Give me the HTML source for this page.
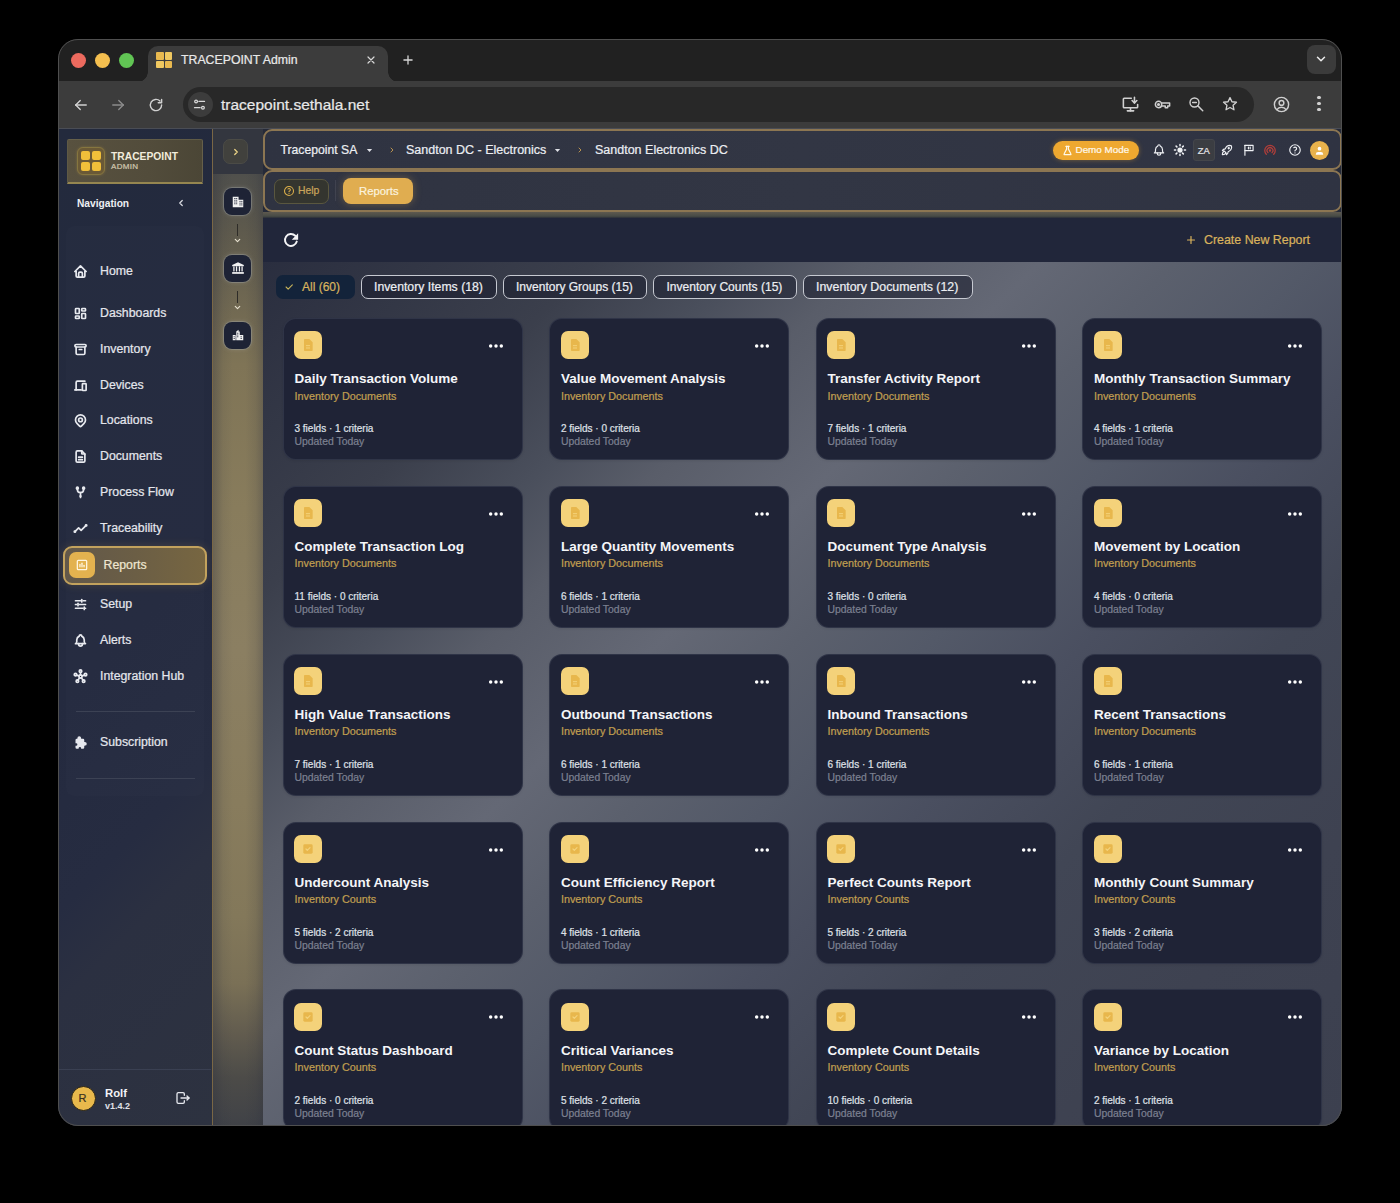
<!DOCTYPE html><html><head><meta charset="utf-8"><style>
*{box-sizing:border-box;margin:0;padding:0}
html,body{width:1400px;height:1203px;background:#000;overflow:hidden;font-family:"Liberation Sans",sans-serif}
.a{position:absolute;display:block}
.t{position:absolute;white-space:nowrap}
#root{position:absolute;left:0;top:0;width:1400px;height:1203px;clip-path:inset(39px 58px 77px 58px round 20px);background:#212121}
#winb{position:absolute;left:58px;top:39px;width:1284px;height:1087px;border-radius:20px;border:1.6px solid #4f4f4f;z-index:50}
.tl{position:absolute;top:53px;width:15px;height:15px;border-radius:50%}
#tab{position:absolute;left:148px;top:46px;width:240px;height:36px;background:#3c3c3c;border-radius:10px 10px 0 0}
#tab:before,#tab:after{content:"";position:absolute;bottom:0;width:10px;height:10px}
#tab:before{left:-10px;background:radial-gradient(circle at 0 0,transparent 9.5px,#3c3c3c 10px)}
#tab:after{right:-10px;background:radial-gradient(circle at 100% 0,transparent 9.5px,#3c3c3c 10px)}
.box{position:absolute;border-radius:9px;border:2.2px solid #8c7652;background:linear-gradient(90deg,#2f3341,#323644 50%,#2f3342)}
.card{position:absolute;width:240px;height:142px;border-radius:13px;background:#1f2336;border:1px solid rgba(150,158,178,0.14);box-shadow:0 1px 3px rgba(0,0,0,0.08)}
.cicon{position:absolute;left:10.4px;top:12.6px;width:28px;height:28px;border-radius:7px;background:#f4d27a}
.chip{position:absolute;top:275px;height:24px;border-radius:7px;border:1.5px solid #c6c9d1;background:rgba(26,30,46,0.6)}
.mbtn{position:absolute;left:224px;width:27px;height:27px;border-radius:8px;background:#1e2335;box-shadow:0 0 0 1px rgba(160,165,170,0.35),0 0 5px rgba(200,200,200,0.25)}
</style></head><body><div id="root">
<div class="tl" style="left:71px;background:#ec6a5e"></div>
<div class="tl" style="left:95px;background:#f4bf4f"></div>
<div class="tl" style="left:119px;background:#61c554"></div>
<div id="tab"></div>
<div class="a" style="left:156px;top:52px;width:16px;height:16px"><div class="a" style="left:0;top:0;width:7.5px;height:7.5px;background:#e9b94f;border-radius:1px"></div><div class="a" style="left:8.5px;top:0;width:7.5px;height:7.5px;background:#f0c860;border-radius:1px"></div><div class="a" style="left:0;top:8.5px;width:7.5px;height:7.5px;background:#f0c860;border-radius:1px"></div><div class="a" style="left:8.5px;top:8.5px;width:7.5px;height:7.5px;background:#e9b94f;border-radius:1px"></div></div>
<div class="t" style="left:181px;top:54.09px;font-size:12.3px;line-height:12.3px;color:#e8e8e8;font-weight:400;-webkit-text-stroke:0.22px currentColor;">TRACEPOINT Admin</div>
<svg class="a" style="left:365px;top:54px;" width="12" height="12" viewBox="0 0 24 24" fill="none" stroke="#d8d8d8" stroke-width="2.4" stroke-linecap="round" stroke-linejoin="round"><path d="M6 6l12 12M18 6L6 18"/></svg>
<svg class="a" style="left:401px;top:53px;" width="14" height="14" viewBox="0 0 24 24" fill="none" stroke="#d8d8d8" stroke-width="2.2" stroke-linecap="round" stroke-linejoin="round"><path d="M12 5v14"/><path d="M5 12h14"/></svg>
<div class="a" style="left:1307px;top:45px;width:29px;height:29px;border-radius:8px;background:#3b3b3b"></div>
<svg class="a" style="left:1314px;top:52px;" width="14" height="14" viewBox="0 0 24 24" fill="none" stroke="#e8e8e8" stroke-width="2.6" stroke-linecap="round" stroke-linejoin="round"><path d="M6 9l6 6 6-6"/></svg>
<div class="a" style="left:58px;top:81px;width:1284px;height:48px;background:#3c3c3c"></div>
<div class="a" style="left:58px;top:128px;width:1284px;height:1px;background:#4a4d55"></div>
<svg class="a" style="left:72px;top:96px;" width="18" height="18" viewBox="0 0 24 24" fill="none" stroke="#d0d0d0" stroke-width="1.8" stroke-linecap="round" stroke-linejoin="round"><path d="M5 12h14"/><path d="M5 12l6 6"/><path d="M5 12l6-6"/></svg>
<svg class="a" style="left:109px;top:96px;" width="18" height="18" viewBox="0 0 24 24" fill="none" stroke="#8a8a8a" stroke-width="1.8" stroke-linecap="round" stroke-linejoin="round"><path d="M5 12h14"/><path d="M13 18l6-6"/><path d="M13 6l6 6"/></svg>
<svg class="a" style="left:147px;top:96px;" width="18" height="18" viewBox="0 0 24 24" fill="none" stroke="#d0d0d0" stroke-width="1.9" stroke-linecap="round" stroke-linejoin="round"><path d="M19.5 12a7.5 7.5 0 1 1-2.2-5.3"/><path d="M19.5 4.5v4.5h-4.5"/></svg>
<div class="a" style="left:183px;top:87px;width:1071px;height:35px;border-radius:18px;background:#282828"></div>
<div class="a" style="left:187.5px;top:92px;width:25px;height:25px;border-radius:50%;background:#3c3c3c"></div>
<svg class="a" style="left:192px;top:97px;" width="15" height="15" viewBox="0 0 24 24" fill="none" stroke="#d8d8d8" stroke-width="2" stroke-linecap="round" stroke-linejoin="round"><circle cx="6.5" cy="7" r="2.2"/><path d="M11 7h9"/><circle cx="17.5" cy="17" r="2.2"/><path d="M4 17h9"/></svg>
<div class="t" style="left:221px;top:96.88px;font-size:15.5px;line-height:15.5px;color:#e8e8e8;font-weight:400;-webkit-text-stroke:0.22px currentColor;">tracepoint.sethala.net</div>
<svg class="a" style="left:1121px;top:95px;" width="19" height="19" viewBox="0 0 24 24" fill="none" stroke="#d0d0d0" stroke-width="2" stroke-linecap="round" stroke-linejoin="round"><path d="M13 4H4a1 1 0 0 0-1 1v10a1 1 0 0 0 1 1h16a1 1 0 0 0 1-1v-3"/><path d="M8 20h8"/><path d="M12 16v4"/><path d="M17 3v7"/><path d="M14 7l3 3 3-3"/></svg>
<svg class="a" style="left:1153px;top:95px;" width="19" height="19" viewBox="0 0 24 24" fill="none" stroke="#d0d0d0" stroke-width="1.9" stroke-linecap="round" stroke-linejoin="round"><circle cx="7" cy="12" r="4"/><circle cx="7" cy="12" r="1" fill="#d0d0d0"/><path d="M11 10h10v4h-2.5v2h-3v-2H11"/></svg>
<svg class="a" style="left:1187px;top:95px;" width="18" height="18" viewBox="0 0 24 24" fill="none" stroke="#d0d0d0" stroke-width="1.9" stroke-linecap="round" stroke-linejoin="round"><circle cx="10" cy="10" r="6"/><path d="M7.5 10h5"/><path d="M21 21l-6.5-6.5"/></svg>
<svg class="a" style="left:1221px;top:95px;" width="18" height="18" viewBox="0 0 24 24" fill="none" stroke="#d0d0d0" stroke-width="1.8" stroke-linecap="round" stroke-linejoin="round"><path d="M12 3.5l2.6 5.5 6 .7-4.5 4 1.2 6-5.3-3-5.3 3 1.2-6-4.5-4 6-.7z"/></svg>
<svg class="a" style="left:1272px;top:95px;" width="19" height="19" viewBox="0 0 24 24" fill="none" stroke="#d0d0d0" stroke-width="1.8" stroke-linecap="round" stroke-linejoin="round"><circle cx="12" cy="12" r="9"/><circle cx="12" cy="10" r="3"/><path d="M6.2 18.5a7 7 0 0 1 11.6 0"/></svg>
<div class="a" style="left:1317px;top:95.7px;width:3.6px;height:3.6px;border-radius:50%;background:#d0d0d0"></div>
<div class="a" style="left:1317px;top:101.7px;width:3.6px;height:3.6px;border-radius:50%;background:#d0d0d0"></div>
<div class="a" style="left:1317px;top:107.7px;width:3.6px;height:3.6px;border-radius:50%;background:#d0d0d0"></div>
<div class="a" style="left:58px;top:129px;width:154px;height:997px;background:linear-gradient(135deg,#232a3d 0%,#242a3f 50%,#262c41 68%,#2b3041 76%,#2d3240 100%)"></div>
<div class="a" style="left:211.5px;top:129px;width:1.6px;height:997px;background:#7a6745"></div>
<div class="a" style="left:67px;top:139px;width:136px;height:45px;border-radius:2px 2px 0 0;background:linear-gradient(90deg,#58513f 0%,#524c3b 60%,#4b4636 100%);border:1px solid rgba(120,115,90,0.45);border-bottom:2px solid #958650"></div>
<div class="a" style="left:77px;top:147px;width:28px;height:28px;border-radius:6px;background:#6a5936;border:1.5px solid #86763f;box-shadow:0 0 3px rgba(240,190,80,0.25)"></div>
<div class="a" style="left:81px;top:151px;width:9px;height:9px;border-radius:2px;background:#f0bf3a"></div>
<div class="a" style="left:92px;top:151px;width:9px;height:9px;border-radius:2px;background:#f0bf3a"></div>
<div class="a" style="left:81px;top:161.5px;width:9px;height:9px;border-radius:2px;background:#f0bf3a"></div>
<div class="a" style="left:92px;top:161.5px;width:9px;height:9px;border-radius:2px;background:#f0bf3a"></div>
<div class="t" style="left:111px;top:152.28px;font-size:10.3px;line-height:10.3px;color:#f2ecdc;font-weight:700;">TRACEPOINT</div>
<div class="t" style="left:111px;top:163.03px;font-size:8px;line-height:8px;color:#cfc6ae;font-weight:400;letter-spacing:0.3px;-webkit-text-stroke:0.22px currentColor;">ADMIN</div>
<div class="t" style="left:77px;top:198.77px;font-size:10.2px;line-height:10.2px;color:#eef0f4;font-weight:700;">Navigation</div>
<svg class="a" style="left:176px;top:198px;" width="10" height="10" viewBox="0 0 24 24" fill="none" stroke="#d8dae0" stroke-width="3" stroke-linecap="round" stroke-linejoin="round"><path d="M15 6l-6 6 6 6"/></svg>
<div class="a" style="left:66px;top:226px;width:138px;height:570px;border-radius:8px;background:rgba(255,255,255,0.012)"></div>
<svg class="a" style="left:72.5px;top:263.5px;" width="15" height="15" viewBox="0 0 24 24" fill="none" stroke="#e8eaef" stroke-width="2.7" stroke-linecap="round" stroke-linejoin="round"><path d="M5 12H3l9-9 9 9h-2"/><path d="M5 12v7a2 2 0 0 0 2 2h10a2 2 0 0 0 2-2v-7"/><path d="M9 21v-6a2 2 0 0 1 2-2h2a2 2 0 0 1 2 2v6"/></svg>
<div class="t" style="left:100px;top:264.89px;font-size:12.3px;line-height:12.3px;color:#e4e6ec;font-weight:400;-webkit-text-stroke:0.22px currentColor;">Home</div>
<svg class="a" style="left:72.5px;top:305.5px;" width="15" height="15" viewBox="0 0 24 24" fill="none" stroke="#e8eaef" stroke-width="2.7" stroke-linecap="round" stroke-linejoin="round"><rect x="4" y="4" width="6" height="8" rx="1"/><rect x="4" y="16" width="6" height="4" rx="1"/><rect x="14" y="12" width="6" height="8" rx="1"/><rect x="14" y="4" width="6" height="4" rx="1"/></svg>
<div class="t" style="left:100px;top:306.89px;font-size:12.3px;line-height:12.3px;color:#e4e6ec;font-weight:400;-webkit-text-stroke:0.22px currentColor;">Dashboards</div>
<svg class="a" style="left:72.5px;top:341.5px;" width="15" height="15" viewBox="0 0 24 24" fill="none" stroke="#e8eaef" stroke-width="2.7" stroke-linecap="round" stroke-linejoin="round"><rect x="3" y="4" width="18" height="4" rx="2"/><path d="M5 8v10a2 2 0 0 0 2 2h10a2 2 0 0 0 2-2V8"/><path d="M10 12h4"/></svg>
<div class="t" style="left:100px;top:342.89px;font-size:12.3px;line-height:12.3px;color:#e4e6ec;font-weight:400;-webkit-text-stroke:0.22px currentColor;">Inventory</div>
<svg class="a" style="left:72.5px;top:377.5px;" width="15" height="15" viewBox="0 0 24 24" fill="none" stroke="#e8eaef" stroke-width="2.7" stroke-linecap="round" stroke-linejoin="round"><path d="M3 19h10"/><path d="M5 19V7a2 2 0 0 1 2-2h12"/><rect x="15" y="9" width="6" height="11" rx="1"/></svg>
<div class="t" style="left:100px;top:378.89px;font-size:12.3px;line-height:12.3px;color:#e4e6ec;font-weight:400;-webkit-text-stroke:0.22px currentColor;">Devices</div>
<svg class="a" style="left:72.5px;top:413.0px;" width="15" height="15" viewBox="0 0 24 24" fill="none" stroke="#e8eaef" stroke-width="2.7" stroke-linecap="round" stroke-linejoin="round"><circle cx="12" cy="11" r="3"/><path d="M17.657 16.657L13.414 20.9a2 2 0 0 1-2.827 0l-4.244-4.243a8 8 0 1 1 11.314 0z"/></svg>
<div class="t" style="left:100px;top:414.39px;font-size:12.3px;line-height:12.3px;color:#e4e6ec;font-weight:400;-webkit-text-stroke:0.22px currentColor;">Locations</div>
<svg class="a" style="left:72.5px;top:449.0px;" width="15" height="15" viewBox="0 0 24 24" fill="none" stroke="#e8eaef" stroke-width="2.7" stroke-linecap="round" stroke-linejoin="round"><path d="M14 3v4a1 1 0 0 0 1 1h4"/><path d="M17 21H7a2 2 0 0 1-2-2V5a2 2 0 0 1 2-2h7l5 5v11a2 2 0 0 1-2 2z"/><path d="M9 13h6"/><path d="M9 17h6"/></svg>
<div class="t" style="left:100px;top:450.39px;font-size:12.3px;line-height:12.3px;color:#e4e6ec;font-weight:400;-webkit-text-stroke:0.22px currentColor;">Documents</div>
<svg class="a" style="left:72.5px;top:484.5px;" width="15" height="15" viewBox="0 0 24 24" fill="none" stroke="#e8eaef" stroke-width="2.7" stroke-linecap="round" stroke-linejoin="round"><circle cx="12" cy="18" r="0.5"/><circle cx="7" cy="5" r="1.5"/><circle cx="17" cy="5" r="1.5"/><path d="M7 6v1a5 5 0 0 0 5 5 5 5 0 0 0 5-5V6"/><path d="M12 12v8"/></svg>
<div class="t" style="left:100px;top:485.89px;font-size:12.3px;line-height:12.3px;color:#e4e6ec;font-weight:400;-webkit-text-stroke:0.22px currentColor;">Process Flow</div>
<svg class="a" style="left:72.5px;top:520.5px;" width="15" height="15" viewBox="0 0 24 24" fill="none" stroke="#e8eaef" stroke-width="2.7" stroke-linecap="round" stroke-linejoin="round"><path d="M3 17l6-6 4 4 8-8"/><circle cx="3" cy="17" r="1"/><circle cx="21" cy="7" r="1"/></svg>
<div class="t" style="left:100px;top:521.89px;font-size:12.3px;line-height:12.3px;color:#e4e6ec;font-weight:400;-webkit-text-stroke:0.22px currentColor;">Traceability</div>
<svg class="a" style="left:72.5px;top:596.5px;" width="15" height="15" viewBox="0 0 24 24" fill="none" stroke="#e8eaef" stroke-width="2.7" stroke-linecap="round" stroke-linejoin="round"><path d="M4 6h8"/><path d="M16 6h4"/><path d="M14 4v4"/><path d="M4 12h2"/><path d="M10 12h10"/><path d="M8 10v4"/><path d="M4 18h12"/><path d="M20 18h0"/><path d="M18 16v4"/></svg>
<div class="t" style="left:100px;top:597.89px;font-size:12.3px;line-height:12.3px;color:#e4e6ec;font-weight:400;-webkit-text-stroke:0.22px currentColor;">Setup</div>
<svg class="a" style="left:72.5px;top:632.5px;" width="15" height="15" viewBox="0 0 24 24" fill="none" stroke="#e8eaef" stroke-width="2.7" stroke-linecap="round" stroke-linejoin="round"><path d="M10 5a2 2 0 0 1 4 0 7 7 0 0 1 4 6v3a4 4 0 0 0 2 3H4a4 4 0 0 0 2-3v-3a7 7 0 0 1 4-6"/><path d="M9 17v1a3 3 0 0 0 6 0v-1"/></svg>
<div class="t" style="left:100px;top:633.89px;font-size:12.3px;line-height:12.3px;color:#e4e6ec;font-weight:400;-webkit-text-stroke:0.22px currentColor;">Alerts</div>
<svg class="a" style="left:72.5px;top:668.5px;" width="15" height="15" viewBox="0 0 24 24" fill="none" stroke="#e8eaef" stroke-width="2.7" stroke-linecap="round" stroke-linejoin="round"><circle cx="12" cy="12" r="2.5"/><circle cx="12" cy="3.5" r="2"/><circle cx="20" cy="9" r="2"/><circle cx="4" cy="9" r="2"/><circle cx="17" cy="19.5" r="2"/><circle cx="7" cy="19.5" r="2"/><path d="M12 5.5v4"/><path d="M18.2 9.8l-3.8 1.4"/><path d="M5.8 9.8l3.8 1.4"/><path d="M15.9 17.8l-2.4-3.8"/><path d="M8.1 17.8l2.4-3.8"/></svg>
<div class="t" style="left:100px;top:669.89px;font-size:12.3px;line-height:12.3px;color:#e4e6ec;font-weight:400;-webkit-text-stroke:0.22px currentColor;">Integration Hub</div>
<svg class="a" style="left:72.5px;top:734.5px;" width="15" height="15" viewBox="0 0 24 24" fill="none" stroke="#e8eaef" stroke-width="2.7" stroke-linecap="round" stroke-linejoin="round"><path fill="#e6e8ee" stroke="none" d="M10 2a3 3 0 0 1 2.995 2.824L13 5v1h3a2 2 0 0 1 2 2v3h1a3 3 0 0 1 .176 5.995L19 17h-1v3a2 2 0 0 1-2 2h-3v-1a2 2 0 0 0-4 0v1H6a2 2 0 0 1-2-2v-3h1a2 2 0 0 0 0-4H4V8a2 2 0 0 1 2-2h1V5a3 3 0 0 1 3-3z"/></svg>
<div class="t" style="left:100px;top:735.89px;font-size:12.3px;line-height:12.3px;color:#e4e6ec;font-weight:400;-webkit-text-stroke:0.22px currentColor;">Subscription</div>
<div class="a" style="left:63px;top:546px;width:144px;height:39px;border-radius:9px;border:2px solid #c2a25d;background:linear-gradient(90deg,#62584a 0%,#6b5e45 50%,#776641 100%);box-shadow:0 0 10px rgba(200,160,80,0.2)"></div>
<div class="a" style="left:69px;top:552px;width:26px;height:26px;border-radius:7px;background:#e3b24f"></div>
<svg class="a" style="left:75px;top:558px;" width="14" height="14" viewBox="0 0 24 24" fill="none" stroke="#fff6e0" stroke-width="2.2" stroke-linecap="round" stroke-linejoin="round"><rect x="4" y="4" width="16" height="16" rx="1.5"/><path d="M8.5 15v-4"/><path d="M12 15V9"/><path d="M15.5 15v-2.5"/></svg>
<div class="t" style="left:103.5px;top:559.09px;font-size:12.3px;line-height:12.3px;color:#efe6d0;font-weight:400;-webkit-text-stroke:0.22px currentColor;">Reports</div>
<div class="a" style="left:76px;top:711px;width:119px;height:1px;background:#3c4254"></div>
<div class="a" style="left:76px;top:778px;width:119px;height:1px;background:#3c4254"></div>
<div class="a" style="left:59px;top:1069px;width:152px;height:1px;background:#3a4052"></div>
<div class="a" style="left:70.5px;top:1085.5px;width:25px;height:25px;border-radius:50%;background:#e9b94c;border:1px solid #2a2416"></div>
<div class="t" style="left:78.5px;top:1093.19px;font-size:11px;line-height:11px;color:#3a3020;font-weight:400;-webkit-text-stroke:0.22px currentColor;">R</div>
<div class="t" style="left:105px;top:1087.93px;font-size:11.3px;line-height:11.3px;color:#f2f3f6;font-weight:700;">Rolf</div>
<div class="t" style="left:105px;top:1101.98px;font-size:9px;line-height:9px;color:#e0e2e8;font-weight:700;">v1.4.2</div>
<svg class="a" style="left:175px;top:1090px;" width="16" height="16" viewBox="0 0 24 24" fill="none" stroke="#e6e8ee" stroke-width="2" stroke-linecap="round" stroke-linejoin="round"><path d="M14 8V6a2 2 0 0 0-2-2H5a2 2 0 0 0-2 2v12a2 2 0 0 0 2 2h7a2 2 0 0 0 2-2v-2"/><path d="M9 12h12l-3-3"/><path d="M18 15l3-3"/></svg>
<div class="a" style="left:213px;top:129px;width:50px;height:997px;background:#33363f"></div>
<div class="a" style="left:213px;top:173.5px;width:50px;height:952.5px;background:linear-gradient(180deg,#50504c 0%,#5e5a4d 6%,#7f7456 20%,#887c5c 35%,#8b7f62 50%,#887c5d 66%,#83785a 78%,#7a7056 85%,#635d4f 90%,#4c4b48 95%,#404247 100%)"></div>
<div class="a" style="left:213px;top:173.5px;width:50px;height:952.5px;background:linear-gradient(90deg,rgba(40,44,60,0.32) 0%,rgba(40,44,60,0.08) 20%,rgba(40,44,60,0) 40%,rgba(40,44,60,0) 65%,rgba(40,44,60,0.1) 85%,rgba(40,44,60,0.28) 100%)"></div>
<div class="a" style="left:223px;top:139px;width:25px;height:25px;border-radius:7px;background:#41413d;border:1px solid #4b4b46"></div>
<svg class="a" style="left:231px;top:147px;" width="10" height="10" viewBox="0 0 24 24" fill="none" stroke="#e6cf84" stroke-width="3.2" stroke-linecap="round" stroke-linejoin="round"><path d="M9 6l6 6-6 6"/></svg>
<div class="mbtn" style="top:188px"></div>
<div class="a" style="left:237px;top:224px;width:1.2px;height:12px;background:#2e2c28"></div>
<svg class="a" style="left:233px;top:236px;" width="9" height="9" viewBox="0 0 24 24" fill="none" stroke="#e8e2d0" stroke-width="3" stroke-linecap="round" stroke-linejoin="round"><path d="M6 9l6 6 6-6"/></svg>
<div class="mbtn" style="top:254.8px"></div>
<div class="a" style="left:237px;top:290.8px;width:1.2px;height:12px;background:#2e2c28"></div>
<svg class="a" style="left:233px;top:302.8px;" width="9" height="9" viewBox="0 0 24 24" fill="none" stroke="#e8e2d0" stroke-width="3" stroke-linecap="round" stroke-linejoin="round"><path d="M6 9l6 6 6-6"/></svg>
<div class="mbtn" style="top:321.5px"></div>
<svg class="a" style="left:230.5px;top:194.5px;" width="14" height="14" viewBox="0 0 24 24" fill="none" stroke="#f2f2f2" stroke-width="1" stroke-linecap="round" stroke-linejoin="round"><path fill="#f2f2f2" stroke="none" d="M3 21V3h10v5h8v13z"/><path stroke="#1e2335" stroke-width="1.3" d="M6 6h1M9 6h1M6 9h1M9 9h1M6 12h1M9 12h1M6 15h1M9 15h1M15 11h1M18 11h1M15 14h1M18 14h1M15 17h1M18 17h1"/></svg>
<svg class="a" style="left:230.5px;top:261px;" width="14" height="14" viewBox="0 0 24 24" fill="none" stroke="#f2f2f2" stroke-width="1" stroke-linecap="round" stroke-linejoin="round"><path fill="#f2f2f2" stroke="none" d="M12 2l10 5v2H2V7z"/><rect x="2" y="19" width="20" height="3" fill="#f2f2f2" stroke="none"/><path stroke="#f2f2f2" stroke-width="2.2" d="M5 10v7M9.5 10v7M14.5 10v7M19 10v7"/></svg>
<svg class="a" style="left:230.5px;top:328px;" width="14" height="14" viewBox="0 0 24 24" fill="none" stroke="#f2f2f2" stroke-width="1" stroke-linecap="round" stroke-linejoin="round"><path fill="#f2f2f2" stroke="none" d="M9 21V6l4-3v3h2v6h6v9zM3 21v-9h5v9z"/><path stroke="#1e2335" stroke-width="1.3" d="M11 9h1M11 12h1M11 15h1M17 15h1M17 18h1M5 15h1M5 18h1"/></svg>
<div class="a" style="left:263px;top:129px;width:1079px;height:997px;background:#252a39"></div>
<div class="a" style="left:263px;top:262px;width:1079px;height:864px;background:linear-gradient(135deg,#2a2e3f 0%,#3b3f4c 17%,#4a4f5c 25%,#595d69 31%,#646875 40%,#5b606d 47%,#535968 54%,#4a4f60 62%,#414655 72%,#3e4251 85%,#3c404f 100%)"></div>
<div class="box" style="left:263px;top:128.5px;width:1079px;height:41.5px"></div>
<div class="box" style="left:263px;top:169.8px;width:1079px;height:42.4px"></div>
<div class="a" style="left:263px;top:212px;width:1079px;height:6px;background:linear-gradient(180deg,#5e594f,#474b45 70%,#2a2d38)"></div>
<div class="t" style="left:280.5px;top:143.97px;font-size:12.2px;line-height:12.2px;color:#eceef2;font-weight:400;-webkit-text-stroke:0.22px currentColor;">Tracepoint SA</div>
<svg class="a" style="left:365px;top:146px;" width="9" height="9" viewBox="0 0 24 24" fill="none" stroke="#e0e2e8" stroke-width="1" stroke-linecap="round" stroke-linejoin="round"><path fill="#e0e2e8" stroke="none" d="M5 8h14l-7 8z"/></svg>
<svg class="a" style="left:387.5px;top:146px;" width="8" height="8" viewBox="0 0 24 24" fill="none" stroke="#b89250" stroke-width="3" stroke-linecap="round" stroke-linejoin="round"><path d="M9 6l6 6-6 6"/></svg>
<div class="t" style="left:406px;top:143.72px;font-size:12.5px;line-height:12.5px;color:#eceef2;font-weight:400;-webkit-text-stroke:0.22px currentColor;">Sandton DC - Electronics</div>
<svg class="a" style="left:553px;top:146px;" width="9" height="9" viewBox="0 0 24 24" fill="none" stroke="#e0e2e8" stroke-width="1" stroke-linecap="round" stroke-linejoin="round"><path fill="#e0e2e8" stroke="none" d="M5 8h14l-7 8z"/></svg>
<svg class="a" style="left:575.5px;top:146px;" width="8" height="8" viewBox="0 0 24 24" fill="none" stroke="#b89250" stroke-width="3" stroke-linecap="round" stroke-linejoin="round"><path d="M9 6l6 6-6 6"/></svg>
<div class="t" style="left:595px;top:143.72px;font-size:12.5px;line-height:12.5px;color:#eceef2;font-weight:400;-webkit-text-stroke:0.22px currentColor;">Sandton Electronics DC</div>
<div class="a" style="left:1053px;top:140.5px;width:86px;height:19px;border-radius:10px;background:#eea830;box-shadow:0 0 5px rgba(238,168,48,0.4)"></div>
<svg class="a" style="left:1061.5px;top:144.5px;" width="11" height="11" viewBox="0 0 24 24" fill="none" stroke="#fff8e8" stroke-width="2.6" stroke-linecap="round" stroke-linejoin="round"><path d="M8.5 3h7"/><path d="M10 3v6L4.5 19.5a1 1 0 0 0 .9 1.5h13.2a1 1 0 0 0 .9-1.5L14 9V3"/></svg>
<div class="t" style="left:1075.5px;top:145.42px;font-size:9.9px;line-height:9.9px;color:#fff8ea;font-weight:400;-webkit-text-stroke:0.22px currentColor;">Demo Mode</div>
<svg class="a" style="left:1151.5px;top:143px;" width="14" height="14" viewBox="0 0 24 24" fill="none" stroke="#eef0f4" stroke-width="2" stroke-linecap="round" stroke-linejoin="round"><path d="M10 5a2 2 0 0 1 4 0 7 7 0 0 1 4 6v3a4 4 0 0 0 2 3H4a4 4 0 0 0 2-3v-3a7 7 0 0 1 4-6"/><path d="M9 17v1a3 3 0 0 0 6 0v-1"/></svg>
<svg class="a" style="left:1173px;top:143px;" width="14" height="14" viewBox="0 0 24 24" fill="none" stroke="#eef0f4" stroke-width="2" stroke-linecap="round" stroke-linejoin="round"><circle cx="12" cy="12" r="4.5" fill="#eef0f4" stroke="none"/><path stroke-width="2.6" d="M2.5 12h2m7.5-9.5v2m7.5 7.5h2m-9.5 7.5v2M5.3 5.3l1.4 1.4m11-1.4l-1.4 1.4m0 10.6l1.4 1.4m-11-1.4l-1.4 1.4"/></svg>
<div class="a" style="left:1193px;top:139px;width:22px;height:22px;border-radius:3px;background:#3b3d42;border:1px solid #44464b"></div>
<div class="t" style="left:1197.8px;top:145.84px;font-size:9.4px;line-height:9.4px;color:#e4e5e8;font-weight:400;-webkit-text-stroke:0.22px currentColor;">ZA</div>
<svg class="a" style="left:1220px;top:143px;" width="14" height="14" viewBox="0 0 24 24" fill="none" stroke="#eef0f4" stroke-width="2" stroke-linecap="round" stroke-linejoin="round"><path d="M4 13a8 8 0 0 1 7 7 6 6 0 0 0 3-5 9 9 0 0 0 6-8 3 3 0 0 0-3-3 9 9 0 0 0-8 6 6 6 0 0 0-5 3"/><path d="M7 14a6 6 0 0 0-3 6 6 6 0 0 0 6-3"/><circle cx="15" cy="9" r="1"/></svg>
<svg class="a" style="left:1242px;top:143px;" width="14" height="14" viewBox="0 0 24 24" fill="none" stroke="#eef0f4" stroke-width="2" stroke-linecap="round" stroke-linejoin="round"><path d="M5 21V4"/><path d="M5 4h14v9H5"/><path d="M11 7v3"/><path d="M14 7v3"/></svg>
<svg class="a" style="left:1263px;top:143px;" width="14" height="14" viewBox="0 0 24 24" fill="none" stroke="#b03e3a" stroke-width="2.2" stroke-linecap="round" stroke-linejoin="round"><path d="M18.364 19.364a9 9 0 1 0-12.728 0"/><path d="M15.536 16.536a5 5 0 1 0-7.072 0"/><circle cx="12" cy="13" r="1"/></svg>
<svg class="a" style="left:1288px;top:143px;" width="14" height="14" viewBox="0 0 24 24" fill="none" stroke="#eef0f4" stroke-width="2" stroke-linecap="round" stroke-linejoin="round"><circle cx="12" cy="12" r="9"/><path d="M12 17v.01"/><path d="M12 13.5a1.5 1.5 0 0 1 1-1.5 2.6 2.6 0 1 0-3-4"/></svg>
<div class="a" style="left:1309.5px;top:140.5px;width:19px;height:19px;border-radius:50%;background:#e9b24c"></div>
<svg class="a" style="left:1313.5px;top:144.5px;" width="11" height="11" viewBox="0 0 24 24" fill="none" stroke="#fff" stroke-width="1" stroke-linecap="round" stroke-linejoin="round"><circle cx="12" cy="8" r="4" fill="#fff" stroke="none"/><path fill="#fff" stroke="none" d="M4 21v-1a5 5 0 0 1 5-5h6a5 5 0 0 1 5 5v1z"/></svg>
<div class="a" style="left:274px;top:178.5px;width:55px;height:25px;border-radius:7px;border:1px solid #5a573f;background:#34352f"></div>
<svg class="a" style="left:283px;top:185px;" width="12" height="12" viewBox="0 0 24 24" fill="none" stroke="#d9ad4a" stroke-width="2.2" stroke-linecap="round" stroke-linejoin="round"><circle cx="12" cy="12" r="9"/><path d="M12 17v.01"/><path d="M12 13.5a1.5 1.5 0 0 1 1-1.5 2.6 2.6 0 1 0-3-4"/></svg>
<div class="t" style="left:298px;top:186.20px;font-size:10.4px;line-height:10.4px;color:#c9a45a;font-weight:400;-webkit-text-stroke:0.22px currentColor;">Help</div>
<div class="a" style="left:335px;top:180px;width:1px;height:21px;background:#3f4250"></div>
<div class="a" style="left:343px;top:177.5px;width:70px;height:26px;border-radius:8px;background:#e0ad50;box-shadow:0 0 8px rgba(224,173,80,0.35)"></div>
<div class="t" style="left:359px;top:185.73px;font-size:11.3px;line-height:11.3px;color:#fbf3df;font-weight:400;-webkit-text-stroke:0.22px currentColor;">Reports</div>
<div class="a" style="left:263px;top:218px;width:1079px;height:44px;background:#21263a"></div>
<svg class="a" style="left:282px;top:231px;" width="18" height="18" viewBox="0 0 24 24" fill="none" stroke="#f4f4f6" stroke-width="2.6" stroke-linecap="round" stroke-linejoin="round"><path d="M19.7 14.1A8 8 0 1 1 17.7 6.3"/><path fill="#f4f4f6" stroke="none" d="M21.5 3v8.5H13z"/></svg>
<svg class="a" style="left:1185px;top:233.5px;" width="12" height="12" viewBox="0 0 24 24" fill="none" stroke="#d9b25c" stroke-width="2.4" stroke-linecap="round" stroke-linejoin="round"><path d="M12 5v14"/><path d="M5 12h14"/></svg>
<div class="t" style="left:1204px;top:233.70px;font-size:12.4px;line-height:12.4px;color:#d9b25c;font-weight:400;-webkit-text-stroke:0.22px currentColor;">Create New Report</div>
<div class="a" style="left:276px;top:275px;width:79px;height:24px;border-radius:7px;background:#13233a"></div>
<svg class="a" style="left:284px;top:282px;" width="10" height="10" viewBox="0 0 24 24" fill="none" stroke="#c9b45a" stroke-width="2.6" stroke-linecap="round" stroke-linejoin="round"><path d="M5 12l5 5L20 7"/></svg>
<div class="t" style="left:302px;top:281.14px;font-size:12px;line-height:12px;color:#d8b45e;font-weight:400;-webkit-text-stroke:0.22px currentColor;">All (60)</div>
<div class="chip" style="left:360.5px;width:136.0px"></div>
<div class="t" style="left:374.0px;top:280.92px;font-size:12.26px;line-height:12.26px;color:#eceef2;font-weight:400;-webkit-text-stroke:0.22px currentColor;">Inventory Items (18)</div>
<div class="chip" style="left:502.5px;width:144.5px"></div>
<div class="t" style="left:516.0px;top:281.12px;font-size:12.03px;line-height:12.03px;color:#eceef2;font-weight:400;-webkit-text-stroke:0.22px currentColor;">Inventory Groups (15)</div>
<div class="chip" style="left:653px;width:144px"></div>
<div class="t" style="left:666.5px;top:281.09px;font-size:12.06px;line-height:12.06px;color:#eceef2;font-weight:400;-webkit-text-stroke:0.22px currentColor;">Inventory Counts (15)</div>
<div class="chip" style="left:802.5px;width:170.0px"></div>
<div class="t" style="left:816.0px;top:280.81px;font-size:12.39px;line-height:12.39px;color:#eceef2;font-weight:400;-webkit-text-stroke:0.22px currentColor;">Inventory Documents (12)</div>
<div class="card" style="left:283px;top:317.8px">
<div class="cicon"></div>
<svg class="a" style="left:16.4px;top:18.6px;" width="16" height="16" viewBox="0 0 24 24" fill="none" stroke="#e8b74c" stroke-width="1" stroke-linecap="round" stroke-linejoin="round"><path fill="#e8b74c" stroke="none" d="M7 3h7l5 5v12a1 1 0 0 1-1 1H7a1 1 0 0 1-1-1V4a1 1 0 0 1 1-1z"/><path stroke="#f4d27a" stroke-width="1.5" d="M9.5 13h5M9.5 16.5h5"/></svg>
<svg class="a" style="left:203.5px;top:19px;" width="16" height="16" viewBox="0 0 24 24" fill="none" stroke="#fff" stroke-width="1" stroke-linecap="round" stroke-linejoin="round"><circle cx="4" cy="12" r="2.6" fill="#fff" stroke="none"/><circle cx="12" cy="12" r="2.6" fill="#fff" stroke="none"/><circle cx="20" cy="12" r="2.6" fill="#fff" stroke="none"/></svg>
<div class="t" style="left:10.5px;top:53.47px;font-size:13.5px;line-height:13.5px;color:#f4f5f8;font-weight:700;">Daily Transaction Volume</div>
<div class="t" style="left:10.5px;top:71.76px;font-size:10.8px;line-height:10.8px;color:#c09f50;font-weight:400;-webkit-text-stroke:0.22px currentColor;">Inventory Documents</div>
<div class="t" style="left:10.5px;top:105.53px;font-size:10px;line-height:10px;color:#dfe0e6;font-weight:400;-webkit-text-stroke:0.22px currentColor;">3 fields · 1 criteria</div>
<div class="t" style="left:10.5px;top:118.20px;font-size:10.4px;line-height:10.4px;color:#7c8090;font-weight:400;-webkit-text-stroke:0.22px currentColor;">Updated Today</div>
</div>
<div class="card" style="left:549.4px;top:317.8px">
<div class="cicon"></div>
<svg class="a" style="left:16.4px;top:18.6px;" width="16" height="16" viewBox="0 0 24 24" fill="none" stroke="#e8b74c" stroke-width="1" stroke-linecap="round" stroke-linejoin="round"><path fill="#e8b74c" stroke="none" d="M7 3h7l5 5v12a1 1 0 0 1-1 1H7a1 1 0 0 1-1-1V4a1 1 0 0 1 1-1z"/><path stroke="#f4d27a" stroke-width="1.5" d="M9.5 13h5M9.5 16.5h5"/></svg>
<svg class="a" style="left:203.5px;top:19px;" width="16" height="16" viewBox="0 0 24 24" fill="none" stroke="#fff" stroke-width="1" stroke-linecap="round" stroke-linejoin="round"><circle cx="4" cy="12" r="2.6" fill="#fff" stroke="none"/><circle cx="12" cy="12" r="2.6" fill="#fff" stroke="none"/><circle cx="20" cy="12" r="2.6" fill="#fff" stroke="none"/></svg>
<div class="t" style="left:10.5px;top:53.47px;font-size:13.5px;line-height:13.5px;color:#f4f5f8;font-weight:700;">Value Movement Analysis</div>
<div class="t" style="left:10.5px;top:71.76px;font-size:10.8px;line-height:10.8px;color:#c09f50;font-weight:400;-webkit-text-stroke:0.22px currentColor;">Inventory Documents</div>
<div class="t" style="left:10.5px;top:105.53px;font-size:10px;line-height:10px;color:#dfe0e6;font-weight:400;-webkit-text-stroke:0.22px currentColor;">2 fields · 0 criteria</div>
<div class="t" style="left:10.5px;top:118.20px;font-size:10.4px;line-height:10.4px;color:#7c8090;font-weight:400;-webkit-text-stroke:0.22px currentColor;">Updated Today</div>
</div>
<div class="card" style="left:816px;top:317.8px">
<div class="cicon"></div>
<svg class="a" style="left:16.4px;top:18.6px;" width="16" height="16" viewBox="0 0 24 24" fill="none" stroke="#e8b74c" stroke-width="1" stroke-linecap="round" stroke-linejoin="round"><path fill="#e8b74c" stroke="none" d="M7 3h7l5 5v12a1 1 0 0 1-1 1H7a1 1 0 0 1-1-1V4a1 1 0 0 1 1-1z"/><path stroke="#f4d27a" stroke-width="1.5" d="M9.5 13h5M9.5 16.5h5"/></svg>
<svg class="a" style="left:203.5px;top:19px;" width="16" height="16" viewBox="0 0 24 24" fill="none" stroke="#fff" stroke-width="1" stroke-linecap="round" stroke-linejoin="round"><circle cx="4" cy="12" r="2.6" fill="#fff" stroke="none"/><circle cx="12" cy="12" r="2.6" fill="#fff" stroke="none"/><circle cx="20" cy="12" r="2.6" fill="#fff" stroke="none"/></svg>
<div class="t" style="left:10.5px;top:53.47px;font-size:13.5px;line-height:13.5px;color:#f4f5f8;font-weight:700;">Transfer Activity Report</div>
<div class="t" style="left:10.5px;top:71.76px;font-size:10.8px;line-height:10.8px;color:#c09f50;font-weight:400;-webkit-text-stroke:0.22px currentColor;">Inventory Documents</div>
<div class="t" style="left:10.5px;top:105.53px;font-size:10px;line-height:10px;color:#dfe0e6;font-weight:400;-webkit-text-stroke:0.22px currentColor;">7 fields · 1 criteria</div>
<div class="t" style="left:10.5px;top:118.20px;font-size:10.4px;line-height:10.4px;color:#7c8090;font-weight:400;-webkit-text-stroke:0.22px currentColor;">Updated Today</div>
</div>
<div class="card" style="left:1082.4px;top:317.8px">
<div class="cicon"></div>
<svg class="a" style="left:16.4px;top:18.6px;" width="16" height="16" viewBox="0 0 24 24" fill="none" stroke="#e8b74c" stroke-width="1" stroke-linecap="round" stroke-linejoin="round"><path fill="#e8b74c" stroke="none" d="M7 3h7l5 5v12a1 1 0 0 1-1 1H7a1 1 0 0 1-1-1V4a1 1 0 0 1 1-1z"/><path stroke="#f4d27a" stroke-width="1.5" d="M9.5 13h5M9.5 16.5h5"/></svg>
<svg class="a" style="left:203.5px;top:19px;" width="16" height="16" viewBox="0 0 24 24" fill="none" stroke="#fff" stroke-width="1" stroke-linecap="round" stroke-linejoin="round"><circle cx="4" cy="12" r="2.6" fill="#fff" stroke="none"/><circle cx="12" cy="12" r="2.6" fill="#fff" stroke="none"/><circle cx="20" cy="12" r="2.6" fill="#fff" stroke="none"/></svg>
<div class="t" style="left:10.5px;top:53.47px;font-size:13.5px;line-height:13.5px;color:#f4f5f8;font-weight:700;">Monthly Transaction Summary</div>
<div class="t" style="left:10.5px;top:71.76px;font-size:10.8px;line-height:10.8px;color:#c09f50;font-weight:400;-webkit-text-stroke:0.22px currentColor;">Inventory Documents</div>
<div class="t" style="left:10.5px;top:105.53px;font-size:10px;line-height:10px;color:#dfe0e6;font-weight:400;-webkit-text-stroke:0.22px currentColor;">4 fields · 1 criteria</div>
<div class="t" style="left:10.5px;top:118.20px;font-size:10.4px;line-height:10.4px;color:#7c8090;font-weight:400;-webkit-text-stroke:0.22px currentColor;">Updated Today</div>
</div>
<div class="card" style="left:283px;top:485.7px">
<div class="cicon"></div>
<svg class="a" style="left:16.4px;top:18.6px;" width="16" height="16" viewBox="0 0 24 24" fill="none" stroke="#e8b74c" stroke-width="1" stroke-linecap="round" stroke-linejoin="round"><path fill="#e8b74c" stroke="none" d="M7 3h7l5 5v12a1 1 0 0 1-1 1H7a1 1 0 0 1-1-1V4a1 1 0 0 1 1-1z"/><path stroke="#f4d27a" stroke-width="1.5" d="M9.5 13h5M9.5 16.5h5"/></svg>
<svg class="a" style="left:203.5px;top:19px;" width="16" height="16" viewBox="0 0 24 24" fill="none" stroke="#fff" stroke-width="1" stroke-linecap="round" stroke-linejoin="round"><circle cx="4" cy="12" r="2.6" fill="#fff" stroke="none"/><circle cx="12" cy="12" r="2.6" fill="#fff" stroke="none"/><circle cx="20" cy="12" r="2.6" fill="#fff" stroke="none"/></svg>
<div class="t" style="left:10.5px;top:53.47px;font-size:13.5px;line-height:13.5px;color:#f4f5f8;font-weight:700;">Complete Transaction Log</div>
<div class="t" style="left:10.5px;top:71.76px;font-size:10.8px;line-height:10.8px;color:#c09f50;font-weight:400;-webkit-text-stroke:0.22px currentColor;">Inventory Documents</div>
<div class="t" style="left:10.5px;top:105.53px;font-size:10px;line-height:10px;color:#dfe0e6;font-weight:400;-webkit-text-stroke:0.22px currentColor;">11 fields · 0 criteria</div>
<div class="t" style="left:10.5px;top:118.20px;font-size:10.4px;line-height:10.4px;color:#7c8090;font-weight:400;-webkit-text-stroke:0.22px currentColor;">Updated Today</div>
</div>
<div class="card" style="left:549.4px;top:485.7px">
<div class="cicon"></div>
<svg class="a" style="left:16.4px;top:18.6px;" width="16" height="16" viewBox="0 0 24 24" fill="none" stroke="#e8b74c" stroke-width="1" stroke-linecap="round" stroke-linejoin="round"><path fill="#e8b74c" stroke="none" d="M7 3h7l5 5v12a1 1 0 0 1-1 1H7a1 1 0 0 1-1-1V4a1 1 0 0 1 1-1z"/><path stroke="#f4d27a" stroke-width="1.5" d="M9.5 13h5M9.5 16.5h5"/></svg>
<svg class="a" style="left:203.5px;top:19px;" width="16" height="16" viewBox="0 0 24 24" fill="none" stroke="#fff" stroke-width="1" stroke-linecap="round" stroke-linejoin="round"><circle cx="4" cy="12" r="2.6" fill="#fff" stroke="none"/><circle cx="12" cy="12" r="2.6" fill="#fff" stroke="none"/><circle cx="20" cy="12" r="2.6" fill="#fff" stroke="none"/></svg>
<div class="t" style="left:10.5px;top:53.47px;font-size:13.5px;line-height:13.5px;color:#f4f5f8;font-weight:700;">Large Quantity Movements</div>
<div class="t" style="left:10.5px;top:71.76px;font-size:10.8px;line-height:10.8px;color:#c09f50;font-weight:400;-webkit-text-stroke:0.22px currentColor;">Inventory Documents</div>
<div class="t" style="left:10.5px;top:105.53px;font-size:10px;line-height:10px;color:#dfe0e6;font-weight:400;-webkit-text-stroke:0.22px currentColor;">6 fields · 1 criteria</div>
<div class="t" style="left:10.5px;top:118.20px;font-size:10.4px;line-height:10.4px;color:#7c8090;font-weight:400;-webkit-text-stroke:0.22px currentColor;">Updated Today</div>
</div>
<div class="card" style="left:816px;top:485.7px">
<div class="cicon"></div>
<svg class="a" style="left:16.4px;top:18.6px;" width="16" height="16" viewBox="0 0 24 24" fill="none" stroke="#e8b74c" stroke-width="1" stroke-linecap="round" stroke-linejoin="round"><path fill="#e8b74c" stroke="none" d="M7 3h7l5 5v12a1 1 0 0 1-1 1H7a1 1 0 0 1-1-1V4a1 1 0 0 1 1-1z"/><path stroke="#f4d27a" stroke-width="1.5" d="M9.5 13h5M9.5 16.5h5"/></svg>
<svg class="a" style="left:203.5px;top:19px;" width="16" height="16" viewBox="0 0 24 24" fill="none" stroke="#fff" stroke-width="1" stroke-linecap="round" stroke-linejoin="round"><circle cx="4" cy="12" r="2.6" fill="#fff" stroke="none"/><circle cx="12" cy="12" r="2.6" fill="#fff" stroke="none"/><circle cx="20" cy="12" r="2.6" fill="#fff" stroke="none"/></svg>
<div class="t" style="left:10.5px;top:53.47px;font-size:13.5px;line-height:13.5px;color:#f4f5f8;font-weight:700;">Document Type Analysis</div>
<div class="t" style="left:10.5px;top:71.76px;font-size:10.8px;line-height:10.8px;color:#c09f50;font-weight:400;-webkit-text-stroke:0.22px currentColor;">Inventory Documents</div>
<div class="t" style="left:10.5px;top:105.53px;font-size:10px;line-height:10px;color:#dfe0e6;font-weight:400;-webkit-text-stroke:0.22px currentColor;">3 fields · 0 criteria</div>
<div class="t" style="left:10.5px;top:118.20px;font-size:10.4px;line-height:10.4px;color:#7c8090;font-weight:400;-webkit-text-stroke:0.22px currentColor;">Updated Today</div>
</div>
<div class="card" style="left:1082.4px;top:485.7px">
<div class="cicon"></div>
<svg class="a" style="left:16.4px;top:18.6px;" width="16" height="16" viewBox="0 0 24 24" fill="none" stroke="#e8b74c" stroke-width="1" stroke-linecap="round" stroke-linejoin="round"><path fill="#e8b74c" stroke="none" d="M7 3h7l5 5v12a1 1 0 0 1-1 1H7a1 1 0 0 1-1-1V4a1 1 0 0 1 1-1z"/><path stroke="#f4d27a" stroke-width="1.5" d="M9.5 13h5M9.5 16.5h5"/></svg>
<svg class="a" style="left:203.5px;top:19px;" width="16" height="16" viewBox="0 0 24 24" fill="none" stroke="#fff" stroke-width="1" stroke-linecap="round" stroke-linejoin="round"><circle cx="4" cy="12" r="2.6" fill="#fff" stroke="none"/><circle cx="12" cy="12" r="2.6" fill="#fff" stroke="none"/><circle cx="20" cy="12" r="2.6" fill="#fff" stroke="none"/></svg>
<div class="t" style="left:10.5px;top:53.47px;font-size:13.5px;line-height:13.5px;color:#f4f5f8;font-weight:700;">Movement by Location</div>
<div class="t" style="left:10.5px;top:71.76px;font-size:10.8px;line-height:10.8px;color:#c09f50;font-weight:400;-webkit-text-stroke:0.22px currentColor;">Inventory Documents</div>
<div class="t" style="left:10.5px;top:105.53px;font-size:10px;line-height:10px;color:#dfe0e6;font-weight:400;-webkit-text-stroke:0.22px currentColor;">4 fields · 0 criteria</div>
<div class="t" style="left:10.5px;top:118.20px;font-size:10.4px;line-height:10.4px;color:#7c8090;font-weight:400;-webkit-text-stroke:0.22px currentColor;">Updated Today</div>
</div>
<div class="card" style="left:283px;top:653.6px">
<div class="cicon"></div>
<svg class="a" style="left:16.4px;top:18.6px;" width="16" height="16" viewBox="0 0 24 24" fill="none" stroke="#e8b74c" stroke-width="1" stroke-linecap="round" stroke-linejoin="round"><path fill="#e8b74c" stroke="none" d="M7 3h7l5 5v12a1 1 0 0 1-1 1H7a1 1 0 0 1-1-1V4a1 1 0 0 1 1-1z"/><path stroke="#f4d27a" stroke-width="1.5" d="M9.5 13h5M9.5 16.5h5"/></svg>
<svg class="a" style="left:203.5px;top:19px;" width="16" height="16" viewBox="0 0 24 24" fill="none" stroke="#fff" stroke-width="1" stroke-linecap="round" stroke-linejoin="round"><circle cx="4" cy="12" r="2.6" fill="#fff" stroke="none"/><circle cx="12" cy="12" r="2.6" fill="#fff" stroke="none"/><circle cx="20" cy="12" r="2.6" fill="#fff" stroke="none"/></svg>
<div class="t" style="left:10.5px;top:53.47px;font-size:13.5px;line-height:13.5px;color:#f4f5f8;font-weight:700;">High Value Transactions</div>
<div class="t" style="left:10.5px;top:71.76px;font-size:10.8px;line-height:10.8px;color:#c09f50;font-weight:400;-webkit-text-stroke:0.22px currentColor;">Inventory Documents</div>
<div class="t" style="left:10.5px;top:105.53px;font-size:10px;line-height:10px;color:#dfe0e6;font-weight:400;-webkit-text-stroke:0.22px currentColor;">7 fields · 1 criteria</div>
<div class="t" style="left:10.5px;top:118.20px;font-size:10.4px;line-height:10.4px;color:#7c8090;font-weight:400;-webkit-text-stroke:0.22px currentColor;">Updated Today</div>
</div>
<div class="card" style="left:549.4px;top:653.6px">
<div class="cicon"></div>
<svg class="a" style="left:16.4px;top:18.6px;" width="16" height="16" viewBox="0 0 24 24" fill="none" stroke="#e8b74c" stroke-width="1" stroke-linecap="round" stroke-linejoin="round"><path fill="#e8b74c" stroke="none" d="M7 3h7l5 5v12a1 1 0 0 1-1 1H7a1 1 0 0 1-1-1V4a1 1 0 0 1 1-1z"/><path stroke="#f4d27a" stroke-width="1.5" d="M9.5 13h5M9.5 16.5h5"/></svg>
<svg class="a" style="left:203.5px;top:19px;" width="16" height="16" viewBox="0 0 24 24" fill="none" stroke="#fff" stroke-width="1" stroke-linecap="round" stroke-linejoin="round"><circle cx="4" cy="12" r="2.6" fill="#fff" stroke="none"/><circle cx="12" cy="12" r="2.6" fill="#fff" stroke="none"/><circle cx="20" cy="12" r="2.6" fill="#fff" stroke="none"/></svg>
<div class="t" style="left:10.5px;top:53.47px;font-size:13.5px;line-height:13.5px;color:#f4f5f8;font-weight:700;">Outbound Transactions</div>
<div class="t" style="left:10.5px;top:71.76px;font-size:10.8px;line-height:10.8px;color:#c09f50;font-weight:400;-webkit-text-stroke:0.22px currentColor;">Inventory Documents</div>
<div class="t" style="left:10.5px;top:105.53px;font-size:10px;line-height:10px;color:#dfe0e6;font-weight:400;-webkit-text-stroke:0.22px currentColor;">6 fields · 1 criteria</div>
<div class="t" style="left:10.5px;top:118.20px;font-size:10.4px;line-height:10.4px;color:#7c8090;font-weight:400;-webkit-text-stroke:0.22px currentColor;">Updated Today</div>
</div>
<div class="card" style="left:816px;top:653.6px">
<div class="cicon"></div>
<svg class="a" style="left:16.4px;top:18.6px;" width="16" height="16" viewBox="0 0 24 24" fill="none" stroke="#e8b74c" stroke-width="1" stroke-linecap="round" stroke-linejoin="round"><path fill="#e8b74c" stroke="none" d="M7 3h7l5 5v12a1 1 0 0 1-1 1H7a1 1 0 0 1-1-1V4a1 1 0 0 1 1-1z"/><path stroke="#f4d27a" stroke-width="1.5" d="M9.5 13h5M9.5 16.5h5"/></svg>
<svg class="a" style="left:203.5px;top:19px;" width="16" height="16" viewBox="0 0 24 24" fill="none" stroke="#fff" stroke-width="1" stroke-linecap="round" stroke-linejoin="round"><circle cx="4" cy="12" r="2.6" fill="#fff" stroke="none"/><circle cx="12" cy="12" r="2.6" fill="#fff" stroke="none"/><circle cx="20" cy="12" r="2.6" fill="#fff" stroke="none"/></svg>
<div class="t" style="left:10.5px;top:53.47px;font-size:13.5px;line-height:13.5px;color:#f4f5f8;font-weight:700;">Inbound Transactions</div>
<div class="t" style="left:10.5px;top:71.76px;font-size:10.8px;line-height:10.8px;color:#c09f50;font-weight:400;-webkit-text-stroke:0.22px currentColor;">Inventory Documents</div>
<div class="t" style="left:10.5px;top:105.53px;font-size:10px;line-height:10px;color:#dfe0e6;font-weight:400;-webkit-text-stroke:0.22px currentColor;">6 fields · 1 criteria</div>
<div class="t" style="left:10.5px;top:118.20px;font-size:10.4px;line-height:10.4px;color:#7c8090;font-weight:400;-webkit-text-stroke:0.22px currentColor;">Updated Today</div>
</div>
<div class="card" style="left:1082.4px;top:653.6px">
<div class="cicon"></div>
<svg class="a" style="left:16.4px;top:18.6px;" width="16" height="16" viewBox="0 0 24 24" fill="none" stroke="#e8b74c" stroke-width="1" stroke-linecap="round" stroke-linejoin="round"><path fill="#e8b74c" stroke="none" d="M7 3h7l5 5v12a1 1 0 0 1-1 1H7a1 1 0 0 1-1-1V4a1 1 0 0 1 1-1z"/><path stroke="#f4d27a" stroke-width="1.5" d="M9.5 13h5M9.5 16.5h5"/></svg>
<svg class="a" style="left:203.5px;top:19px;" width="16" height="16" viewBox="0 0 24 24" fill="none" stroke="#fff" stroke-width="1" stroke-linecap="round" stroke-linejoin="round"><circle cx="4" cy="12" r="2.6" fill="#fff" stroke="none"/><circle cx="12" cy="12" r="2.6" fill="#fff" stroke="none"/><circle cx="20" cy="12" r="2.6" fill="#fff" stroke="none"/></svg>
<div class="t" style="left:10.5px;top:53.47px;font-size:13.5px;line-height:13.5px;color:#f4f5f8;font-weight:700;">Recent Transactions</div>
<div class="t" style="left:10.5px;top:71.76px;font-size:10.8px;line-height:10.8px;color:#c09f50;font-weight:400;-webkit-text-stroke:0.22px currentColor;">Inventory Documents</div>
<div class="t" style="left:10.5px;top:105.53px;font-size:10px;line-height:10px;color:#dfe0e6;font-weight:400;-webkit-text-stroke:0.22px currentColor;">6 fields · 1 criteria</div>
<div class="t" style="left:10.5px;top:118.20px;font-size:10.4px;line-height:10.4px;color:#7c8090;font-weight:400;-webkit-text-stroke:0.22px currentColor;">Updated Today</div>
</div>
<div class="card" style="left:283px;top:821.5px">
<div class="cicon"></div>
<svg class="a" style="left:16.4px;top:18.6px;" width="16" height="16" viewBox="0 0 24 24" fill="none" stroke="#e8b74c" stroke-width="1" stroke-linecap="round" stroke-linejoin="round"><rect x="5" y="5" width="14" height="14" rx="2" fill="#e8b74c" stroke="none"/><path stroke="#f4d27a" stroke-width="1.8" d="M9 12l2 2 4-4"/></svg>
<svg class="a" style="left:203.5px;top:19px;" width="16" height="16" viewBox="0 0 24 24" fill="none" stroke="#fff" stroke-width="1" stroke-linecap="round" stroke-linejoin="round"><circle cx="4" cy="12" r="2.6" fill="#fff" stroke="none"/><circle cx="12" cy="12" r="2.6" fill="#fff" stroke="none"/><circle cx="20" cy="12" r="2.6" fill="#fff" stroke="none"/></svg>
<div class="t" style="left:10.5px;top:53.47px;font-size:13.5px;line-height:13.5px;color:#f4f5f8;font-weight:700;">Undercount Analysis</div>
<div class="t" style="left:10.5px;top:71.76px;font-size:10.8px;line-height:10.8px;color:#c09f50;font-weight:400;-webkit-text-stroke:0.22px currentColor;">Inventory Counts</div>
<div class="t" style="left:10.5px;top:105.53px;font-size:10px;line-height:10px;color:#dfe0e6;font-weight:400;-webkit-text-stroke:0.22px currentColor;">5 fields · 2 criteria</div>
<div class="t" style="left:10.5px;top:118.20px;font-size:10.4px;line-height:10.4px;color:#7c8090;font-weight:400;-webkit-text-stroke:0.22px currentColor;">Updated Today</div>
</div>
<div class="card" style="left:549.4px;top:821.5px">
<div class="cicon"></div>
<svg class="a" style="left:16.4px;top:18.6px;" width="16" height="16" viewBox="0 0 24 24" fill="none" stroke="#e8b74c" stroke-width="1" stroke-linecap="round" stroke-linejoin="round"><rect x="5" y="5" width="14" height="14" rx="2" fill="#e8b74c" stroke="none"/><path stroke="#f4d27a" stroke-width="1.8" d="M9 12l2 2 4-4"/></svg>
<svg class="a" style="left:203.5px;top:19px;" width="16" height="16" viewBox="0 0 24 24" fill="none" stroke="#fff" stroke-width="1" stroke-linecap="round" stroke-linejoin="round"><circle cx="4" cy="12" r="2.6" fill="#fff" stroke="none"/><circle cx="12" cy="12" r="2.6" fill="#fff" stroke="none"/><circle cx="20" cy="12" r="2.6" fill="#fff" stroke="none"/></svg>
<div class="t" style="left:10.5px;top:53.47px;font-size:13.5px;line-height:13.5px;color:#f4f5f8;font-weight:700;">Count Efficiency Report</div>
<div class="t" style="left:10.5px;top:71.76px;font-size:10.8px;line-height:10.8px;color:#c09f50;font-weight:400;-webkit-text-stroke:0.22px currentColor;">Inventory Counts</div>
<div class="t" style="left:10.5px;top:105.53px;font-size:10px;line-height:10px;color:#dfe0e6;font-weight:400;-webkit-text-stroke:0.22px currentColor;">4 fields · 1 criteria</div>
<div class="t" style="left:10.5px;top:118.20px;font-size:10.4px;line-height:10.4px;color:#7c8090;font-weight:400;-webkit-text-stroke:0.22px currentColor;">Updated Today</div>
</div>
<div class="card" style="left:816px;top:821.5px">
<div class="cicon"></div>
<svg class="a" style="left:16.4px;top:18.6px;" width="16" height="16" viewBox="0 0 24 24" fill="none" stroke="#e8b74c" stroke-width="1" stroke-linecap="round" stroke-linejoin="round"><rect x="5" y="5" width="14" height="14" rx="2" fill="#e8b74c" stroke="none"/><path stroke="#f4d27a" stroke-width="1.8" d="M9 12l2 2 4-4"/></svg>
<svg class="a" style="left:203.5px;top:19px;" width="16" height="16" viewBox="0 0 24 24" fill="none" stroke="#fff" stroke-width="1" stroke-linecap="round" stroke-linejoin="round"><circle cx="4" cy="12" r="2.6" fill="#fff" stroke="none"/><circle cx="12" cy="12" r="2.6" fill="#fff" stroke="none"/><circle cx="20" cy="12" r="2.6" fill="#fff" stroke="none"/></svg>
<div class="t" style="left:10.5px;top:53.47px;font-size:13.5px;line-height:13.5px;color:#f4f5f8;font-weight:700;">Perfect Counts Report</div>
<div class="t" style="left:10.5px;top:71.76px;font-size:10.8px;line-height:10.8px;color:#c09f50;font-weight:400;-webkit-text-stroke:0.22px currentColor;">Inventory Counts</div>
<div class="t" style="left:10.5px;top:105.53px;font-size:10px;line-height:10px;color:#dfe0e6;font-weight:400;-webkit-text-stroke:0.22px currentColor;">5 fields · 2 criteria</div>
<div class="t" style="left:10.5px;top:118.20px;font-size:10.4px;line-height:10.4px;color:#7c8090;font-weight:400;-webkit-text-stroke:0.22px currentColor;">Updated Today</div>
</div>
<div class="card" style="left:1082.4px;top:821.5px">
<div class="cicon"></div>
<svg class="a" style="left:16.4px;top:18.6px;" width="16" height="16" viewBox="0 0 24 24" fill="none" stroke="#e8b74c" stroke-width="1" stroke-linecap="round" stroke-linejoin="round"><rect x="5" y="5" width="14" height="14" rx="2" fill="#e8b74c" stroke="none"/><path stroke="#f4d27a" stroke-width="1.8" d="M9 12l2 2 4-4"/></svg>
<svg class="a" style="left:203.5px;top:19px;" width="16" height="16" viewBox="0 0 24 24" fill="none" stroke="#fff" stroke-width="1" stroke-linecap="round" stroke-linejoin="round"><circle cx="4" cy="12" r="2.6" fill="#fff" stroke="none"/><circle cx="12" cy="12" r="2.6" fill="#fff" stroke="none"/><circle cx="20" cy="12" r="2.6" fill="#fff" stroke="none"/></svg>
<div class="t" style="left:10.5px;top:53.47px;font-size:13.5px;line-height:13.5px;color:#f4f5f8;font-weight:700;">Monthly Count Summary</div>
<div class="t" style="left:10.5px;top:71.76px;font-size:10.8px;line-height:10.8px;color:#c09f50;font-weight:400;-webkit-text-stroke:0.22px currentColor;">Inventory Counts</div>
<div class="t" style="left:10.5px;top:105.53px;font-size:10px;line-height:10px;color:#dfe0e6;font-weight:400;-webkit-text-stroke:0.22px currentColor;">3 fields · 2 criteria</div>
<div class="t" style="left:10.5px;top:118.20px;font-size:10.4px;line-height:10.4px;color:#7c8090;font-weight:400;-webkit-text-stroke:0.22px currentColor;">Updated Today</div>
</div>
<div class="card" style="left:283px;top:989.4px">
<div class="cicon"></div>
<svg class="a" style="left:16.4px;top:18.6px;" width="16" height="16" viewBox="0 0 24 24" fill="none" stroke="#e8b74c" stroke-width="1" stroke-linecap="round" stroke-linejoin="round"><rect x="5" y="5" width="14" height="14" rx="2" fill="#e8b74c" stroke="none"/><path stroke="#f4d27a" stroke-width="1.8" d="M9 12l2 2 4-4"/></svg>
<svg class="a" style="left:203.5px;top:19px;" width="16" height="16" viewBox="0 0 24 24" fill="none" stroke="#fff" stroke-width="1" stroke-linecap="round" stroke-linejoin="round"><circle cx="4" cy="12" r="2.6" fill="#fff" stroke="none"/><circle cx="12" cy="12" r="2.6" fill="#fff" stroke="none"/><circle cx="20" cy="12" r="2.6" fill="#fff" stroke="none"/></svg>
<div class="t" style="left:10.5px;top:53.47px;font-size:13.5px;line-height:13.5px;color:#f4f5f8;font-weight:700;">Count Status Dashboard</div>
<div class="t" style="left:10.5px;top:71.76px;font-size:10.8px;line-height:10.8px;color:#c09f50;font-weight:400;-webkit-text-stroke:0.22px currentColor;">Inventory Counts</div>
<div class="t" style="left:10.5px;top:105.53px;font-size:10px;line-height:10px;color:#dfe0e6;font-weight:400;-webkit-text-stroke:0.22px currentColor;">2 fields · 0 criteria</div>
<div class="t" style="left:10.5px;top:118.20px;font-size:10.4px;line-height:10.4px;color:#7c8090;font-weight:400;-webkit-text-stroke:0.22px currentColor;">Updated Today</div>
</div>
<div class="card" style="left:549.4px;top:989.4px">
<div class="cicon"></div>
<svg class="a" style="left:16.4px;top:18.6px;" width="16" height="16" viewBox="0 0 24 24" fill="none" stroke="#e8b74c" stroke-width="1" stroke-linecap="round" stroke-linejoin="round"><rect x="5" y="5" width="14" height="14" rx="2" fill="#e8b74c" stroke="none"/><path stroke="#f4d27a" stroke-width="1.8" d="M9 12l2 2 4-4"/></svg>
<svg class="a" style="left:203.5px;top:19px;" width="16" height="16" viewBox="0 0 24 24" fill="none" stroke="#fff" stroke-width="1" stroke-linecap="round" stroke-linejoin="round"><circle cx="4" cy="12" r="2.6" fill="#fff" stroke="none"/><circle cx="12" cy="12" r="2.6" fill="#fff" stroke="none"/><circle cx="20" cy="12" r="2.6" fill="#fff" stroke="none"/></svg>
<div class="t" style="left:10.5px;top:53.47px;font-size:13.5px;line-height:13.5px;color:#f4f5f8;font-weight:700;">Critical Variances</div>
<div class="t" style="left:10.5px;top:71.76px;font-size:10.8px;line-height:10.8px;color:#c09f50;font-weight:400;-webkit-text-stroke:0.22px currentColor;">Inventory Counts</div>
<div class="t" style="left:10.5px;top:105.53px;font-size:10px;line-height:10px;color:#dfe0e6;font-weight:400;-webkit-text-stroke:0.22px currentColor;">5 fields · 2 criteria</div>
<div class="t" style="left:10.5px;top:118.20px;font-size:10.4px;line-height:10.4px;color:#7c8090;font-weight:400;-webkit-text-stroke:0.22px currentColor;">Updated Today</div>
</div>
<div class="card" style="left:816px;top:989.4px">
<div class="cicon"></div>
<svg class="a" style="left:16.4px;top:18.6px;" width="16" height="16" viewBox="0 0 24 24" fill="none" stroke="#e8b74c" stroke-width="1" stroke-linecap="round" stroke-linejoin="round"><rect x="5" y="5" width="14" height="14" rx="2" fill="#e8b74c" stroke="none"/><path stroke="#f4d27a" stroke-width="1.8" d="M9 12l2 2 4-4"/></svg>
<svg class="a" style="left:203.5px;top:19px;" width="16" height="16" viewBox="0 0 24 24" fill="none" stroke="#fff" stroke-width="1" stroke-linecap="round" stroke-linejoin="round"><circle cx="4" cy="12" r="2.6" fill="#fff" stroke="none"/><circle cx="12" cy="12" r="2.6" fill="#fff" stroke="none"/><circle cx="20" cy="12" r="2.6" fill="#fff" stroke="none"/></svg>
<div class="t" style="left:10.5px;top:53.47px;font-size:13.5px;line-height:13.5px;color:#f4f5f8;font-weight:700;">Complete Count Details</div>
<div class="t" style="left:10.5px;top:71.76px;font-size:10.8px;line-height:10.8px;color:#c09f50;font-weight:400;-webkit-text-stroke:0.22px currentColor;">Inventory Counts</div>
<div class="t" style="left:10.5px;top:105.53px;font-size:10px;line-height:10px;color:#dfe0e6;font-weight:400;-webkit-text-stroke:0.22px currentColor;">10 fields · 0 criteria</div>
<div class="t" style="left:10.5px;top:118.20px;font-size:10.4px;line-height:10.4px;color:#7c8090;font-weight:400;-webkit-text-stroke:0.22px currentColor;">Updated Today</div>
</div>
<div class="card" style="left:1082.4px;top:989.4px">
<div class="cicon"></div>
<svg class="a" style="left:16.4px;top:18.6px;" width="16" height="16" viewBox="0 0 24 24" fill="none" stroke="#e8b74c" stroke-width="1" stroke-linecap="round" stroke-linejoin="round"><rect x="5" y="5" width="14" height="14" rx="2" fill="#e8b74c" stroke="none"/><path stroke="#f4d27a" stroke-width="1.8" d="M9 12l2 2 4-4"/></svg>
<svg class="a" style="left:203.5px;top:19px;" width="16" height="16" viewBox="0 0 24 24" fill="none" stroke="#fff" stroke-width="1" stroke-linecap="round" stroke-linejoin="round"><circle cx="4" cy="12" r="2.6" fill="#fff" stroke="none"/><circle cx="12" cy="12" r="2.6" fill="#fff" stroke="none"/><circle cx="20" cy="12" r="2.6" fill="#fff" stroke="none"/></svg>
<div class="t" style="left:10.5px;top:53.47px;font-size:13.5px;line-height:13.5px;color:#f4f5f8;font-weight:700;">Variance by Location</div>
<div class="t" style="left:10.5px;top:71.76px;font-size:10.8px;line-height:10.8px;color:#c09f50;font-weight:400;-webkit-text-stroke:0.22px currentColor;">Inventory Counts</div>
<div class="t" style="left:10.5px;top:105.53px;font-size:10px;line-height:10px;color:#dfe0e6;font-weight:400;-webkit-text-stroke:0.22px currentColor;">2 fields · 1 criteria</div>
<div class="t" style="left:10.5px;top:118.20px;font-size:10.4px;line-height:10.4px;color:#7c8090;font-weight:400;-webkit-text-stroke:0.22px currentColor;">Updated Today</div>
</div>
</div><div id="winb"></div></body></html>
